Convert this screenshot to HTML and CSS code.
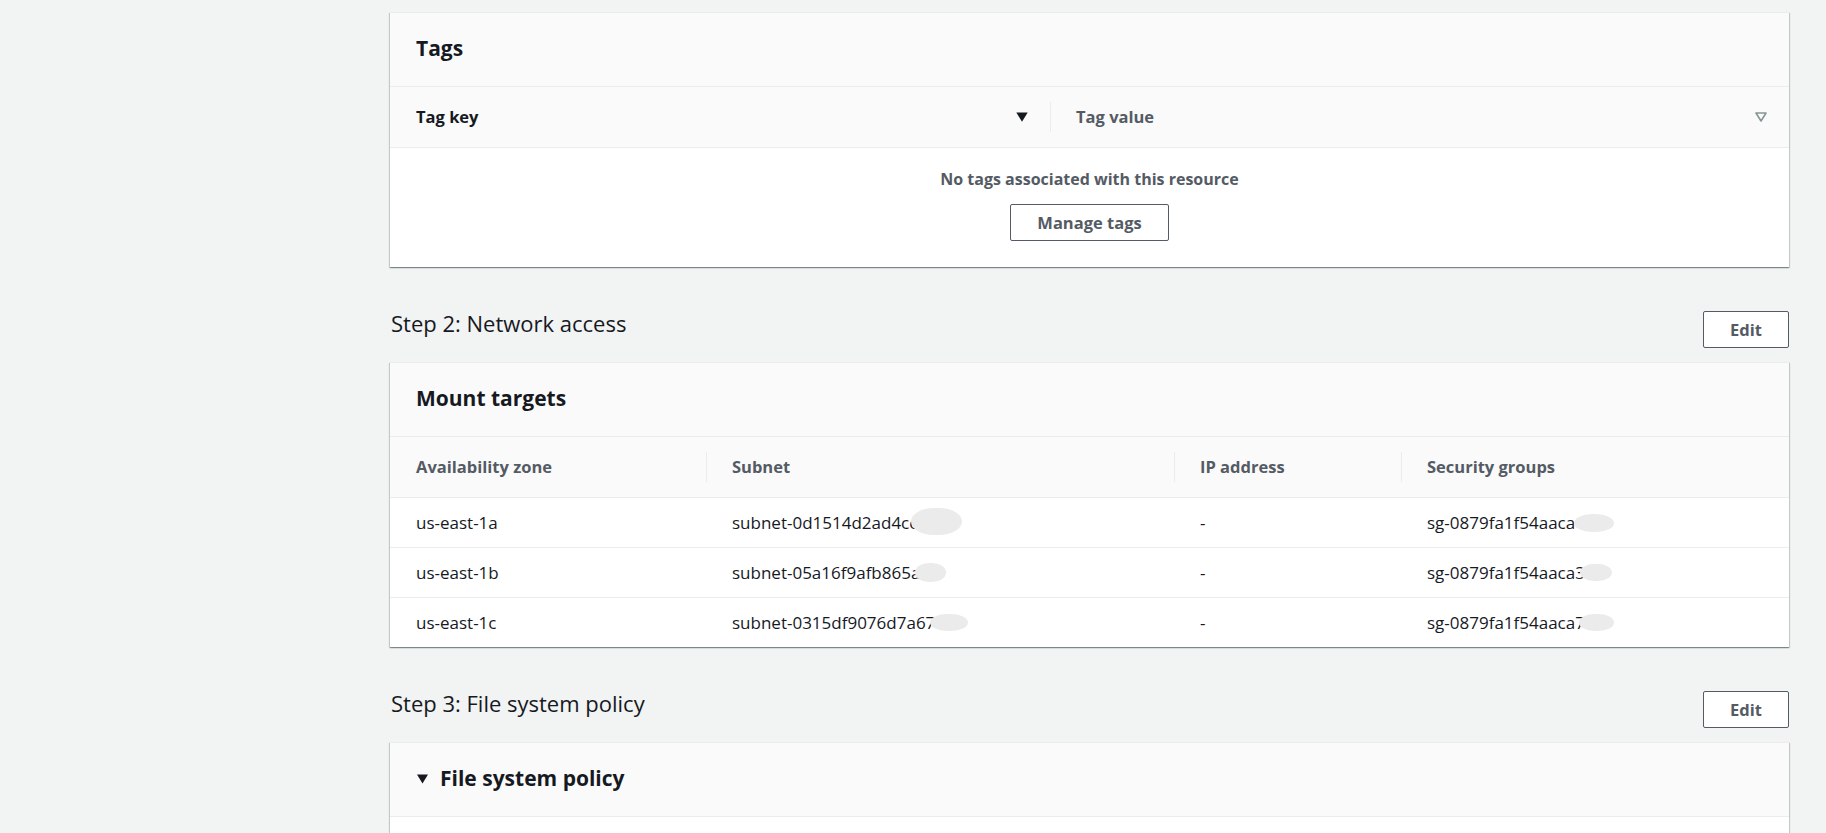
FILE: index.html
```html
<!DOCTYPE html>
<html lang="en">
<head>
<meta charset="utf-8">
<title>File system details</title>
<link rel="stylesheet" href="styles.css">
</head>
<body>
<div class="page">
  <aside class="side"></aside>
  <main class="content">

    <section class="card">
      <div class="card-header"><h2 class="card-title">Tags</h2></div>
      <div class="thead tags-cols">
        <div class="th th-sorted">
          <span>Tag key</span>
          <svg class="sort-icon" width="12" height="10" viewBox="0 0 12 10"><path d="M0.3 0.5 H11.7 L6 9.8 Z" fill="#16191f"/></svg>
        </div>
        <div class="th th-div">
          <span>Tag value</span>
          <svg class="sort-icon" width="12" height="10" viewBox="0 0 12 10"><path d="M1 1 H11 L6 9 Z" fill="none" stroke="#879596" stroke-width="1.6" stroke-linejoin="round"/></svg>
        </div>
      </div>
      <div class="empty">
        <p class="empty-text">No tags associated with this resource</p>
        <button class="btn">Manage tags</button>
      </div>
    </section>

    <div class="step-header">
      <h2 class="step-title">Step 2: Network access</h2>
      <button class="btn">Edit</button>
    </div>

    <section class="card">
      <div class="card-header"><h2 class="card-title">Mount targets</h2></div>
      <div class="thead mt-cols">
        <div class="th">Availability zone</div>
        <div class="th th-div">Subnet</div>
        <div class="th th-div">IP address</div>
        <div class="th th-div">Security groups</div>
      </div>
      <div class="tr mt-cols">
        <div class="td">us-east-1a</div>
        <div class="td">subnet-0d1514d2ad4cc<span class="redact r-a"></span></div>
        <div class="td">-</div>
        <div class="td">sg-0879fa1f54aaca<span class="redact r-d"></span></div>
      </div>
      <div class="tr mt-cols">
        <div class="td">us-east-1b</div>
        <div class="td">subnet-05a16f9afb865a<span class="redact r-b"></span></div>
        <div class="td">-</div>
        <div class="td">sg-0879fa1f54aaca3<span class="redact r-e"></span></div>
      </div>
      <div class="tr mt-cols tr-last">
        <div class="td">us-east-1c</div>
        <div class="td">subnet-0315df9076d7a67<span class="redact r-c"></span></div>
        <div class="td">-</div>
        <div class="td">sg-0879fa1f54aaca7<span class="redact r-f"></span></div>
      </div>
    </section>

    <div class="step-header">
      <h2 class="step-title">Step 3: File system policy</h2>
      <button class="btn">Edit</button>
    </div>

    <section class="card">
      <div class="card-header">
        <svg class="expand-icon" width="11" height="10" viewBox="0 0 11 10"><path d="M0 0.5 H11 L5.5 9.5 Z" fill="#16191f"/></svg>
        <h2 class="card-title">File system policy</h2>
      </div>
      <div class="card-body"></div>
    </section>

  </main>
</div>
</body>
</html>
```

FILE: styles.css
```css
* { box-sizing: border-box; }

html, body {
  margin: 0;
  padding: 0;
}

body {
  background: #f2f3f3;
  color: #16191f;
  font-family: "Open Sans", "Noto Sans", sans-serif;
  font-size: 17px;
  overflow: hidden;
}

.page {
  display: flex;
  padding: 12px 37px 0 0;
  height: 833px;
}

.side {
  flex: none;
  width: 390px;
}

.content {
  flex: 1;
  min-width: 0;
}

.card {
  background: #fff;
  border-top: 1px solid #eaeded;
  box-shadow: 0 1px 1px 0 rgba(0, 28, 36, 0.3),
              1px 1px 1px 0 rgba(0, 28, 36, 0.15),
              -1px 1px 1px 0 rgba(0, 28, 36, 0.15);
}

.card-header {
  display: flex;
  align-items: center;
  height: 74px;
  padding: 0 26px 3px;
  background: #fafafa;
  border-bottom: 1px solid #eaeded;
}

.card-title {
  margin: 0;
  font-size: 21px;
  font-weight: 700;
  color: #16191f;
  line-height: 28px;
}

.expand-icon {
  flex: none;
  margin: 1px 12px 0 1px;
}

.thead {
  display: grid;
  height: 61px;
  background: #fafafa;
  border-bottom: 1px solid #eaeded;
}

.tags-cols { grid-template-columns: 660px 1fr; }
.mt-cols { grid-template-columns: 316px 468px 227px 1fr; }

.th {
  position: relative;
  display: flex;
  align-items: center;
  justify-content: space-between;
  padding: 0 20px 2px 26px;
  font-size: 16.5px;
  font-weight: 700;
  color: #545b64;
}

.tags-cols .th { padding-right: 19px; }

.th-sorted { color: #16191f; }

.th-div::before {
  content: "";
  position: absolute;
  left: 0;
  top: 15px;
  height: 30px;
  border-left: 1px solid #eaeded;
}

.sort-icon {
  flex: none;
  margin-right: 3px;
  margin-top: 2px;
}

.empty {
  display: flex;
  flex-direction: column;
  align-items: center;
  padding: 20px 0 26px;
}

.empty-text {
  margin: 0 0 14px;
  font-size: 16px;
  line-height: 22px;
  font-weight: 700;
  color: #545b64;
}

.btn {
  height: 37px;
  padding: 0 26px;
  background: #fff;
  border: 1px solid #545b64;
  border-radius: 2px;
  font-family: inherit;
  font-size: 16.5px;
  font-weight: 700;
  color: #545b64;
  cursor: pointer;
}

.step-header {
  display: flex;
  align-items: flex-start;
  justify-content: space-between;
  margin: 44px 0 14px;
}

.step-title {
  margin: 0;
  padding-left: 1px;
  font-size: 22px;
  font-weight: 400;
  line-height: 24px;
  color: #16191f;
}

.tr {
  display: grid;
  height: 50px;
  border-bottom: 1px solid #eaeded;
}

.tr-last { border-bottom: none; height: 49px; }

.td {
  display: flex;
  align-items: center;
  padding: 0 20px 0 26px;
  font-size: 17px;
  color: #16191f;
  white-space: nowrap;
}

.redact {
  display: inline-block;
  flex: none;
  background: #ebebeb;
  border-radius: 45% / 50%;
}

.r-a { width: 51px; height: 27px; margin-left: -6px; margin-top: -2px; }
.r-b { width: 31px; height: 19px; margin-left: -5px; }
.r-c { width: 38px; height: 17px; margin-left: -5px; }
.r-d { width: 40px; height: 18px; margin-left: -1px; }
.r-e { width: 32px; height: 17px; margin-left: -5px; }
.r-f { width: 35px; height: 17px; margin-left: -6px; }

.card-body {
  height: 40px;
  background: #fff;
}
```
